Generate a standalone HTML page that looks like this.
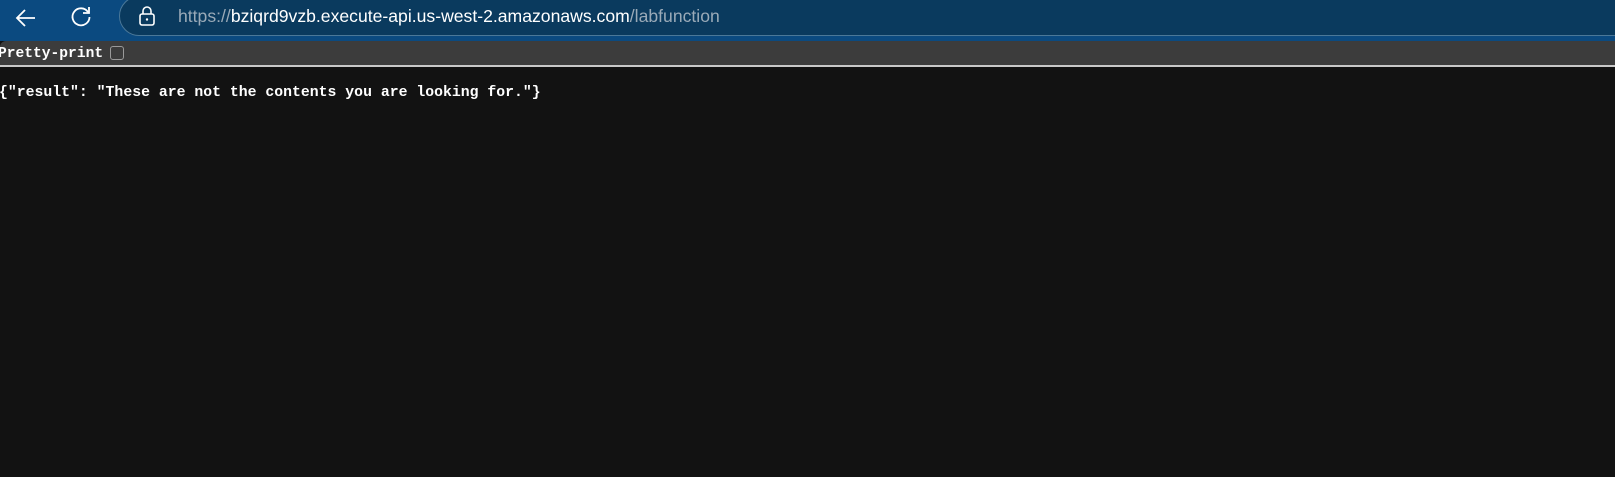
<!DOCTYPE html>
<html><head><style>
body{margin:0;width:1615px;height:477px;background:#121212;overflow:hidden;position:relative;font-family:"Liberation Sans",sans-serif}
.top{position:absolute;left:0;top:0;width:1615px;height:41px;background:#0b4a80}
.pill{position:absolute;left:119px;top:-4px;width:1540px;height:38px;border:1px solid #4b7898;border-radius:20px;background:#0a3a5e}
.url{position:absolute;left:178px;top:6px;font-size:17.6px;color:#fff;white-space:nowrap}
.url .g{color:#9aaab8}
.bar{position:absolute;left:0;top:41px;width:1615px;height:24px;background:#3c3c3c;border-top-left-radius:6px}
.line{position:absolute;left:0;top:65px;width:1615px;height:2px;background:#c8c8c8}
.pp{position:absolute;left:-2px;top:46px;font-family:"Liberation Mono",monospace;font-size:14.6px;color:#fff;font-weight:bold}
.cb{position:absolute;left:110px;top:46px;width:12px;height:12px;border:1px solid #9a9a9a;border-radius:3px}
.json{position:absolute;left:-1px;top:85px;font-family:"Liberation Mono",monospace;font-size:14.8px;color:#fff;font-weight:bold;white-space:pre}
</style></head><body>
<div class="top"></div>
<svg style="position:absolute;left:14px;top:7px" width="24" height="22" viewBox="0 0 24 22"><path d="M21 11H3M11 3L3 11L11 19" stroke="#fff" stroke-width="1.8" fill="none"/></svg>
<svg style="position:absolute;left:69px;top:5px" width="24" height="24" viewBox="0 0 24 24"><path d="M19 7A8.5 8.5 0 1 0 20.5 12" stroke="#fff" stroke-width="1.8" fill="none"/><path d="M20 2V8H14" stroke="#fff" stroke-width="1.8" fill="none"/></svg>
<div class="pill"></div>
<svg style="position:absolute;left:138px;top:6px" width="18" height="20" viewBox="0 0 18 20"><rect x="2" y="8" width="14" height="11" rx="2" stroke="#fff" stroke-width="1.6" fill="none"/><path d="M5 8V5A4 4 0 0 1 13 5V8" stroke="#fff" stroke-width="1.6" fill="none"/><circle cx="9" cy="13.5" r="1.2" fill="#fff"/></svg>
<div class="url"><span class="g">https://</span>bziqrd9vzb.execute-api.us-west-2.amazonaws.com<span class="g">/labfunction</span></div>
<div class="bar"></div>
<div class="line"></div>
<div class="pp">Pretty-print</div>
<div class="cb"></div>
<div class="json">{"result": "These are not the contents you are looking for."}</div>
</body></html>
